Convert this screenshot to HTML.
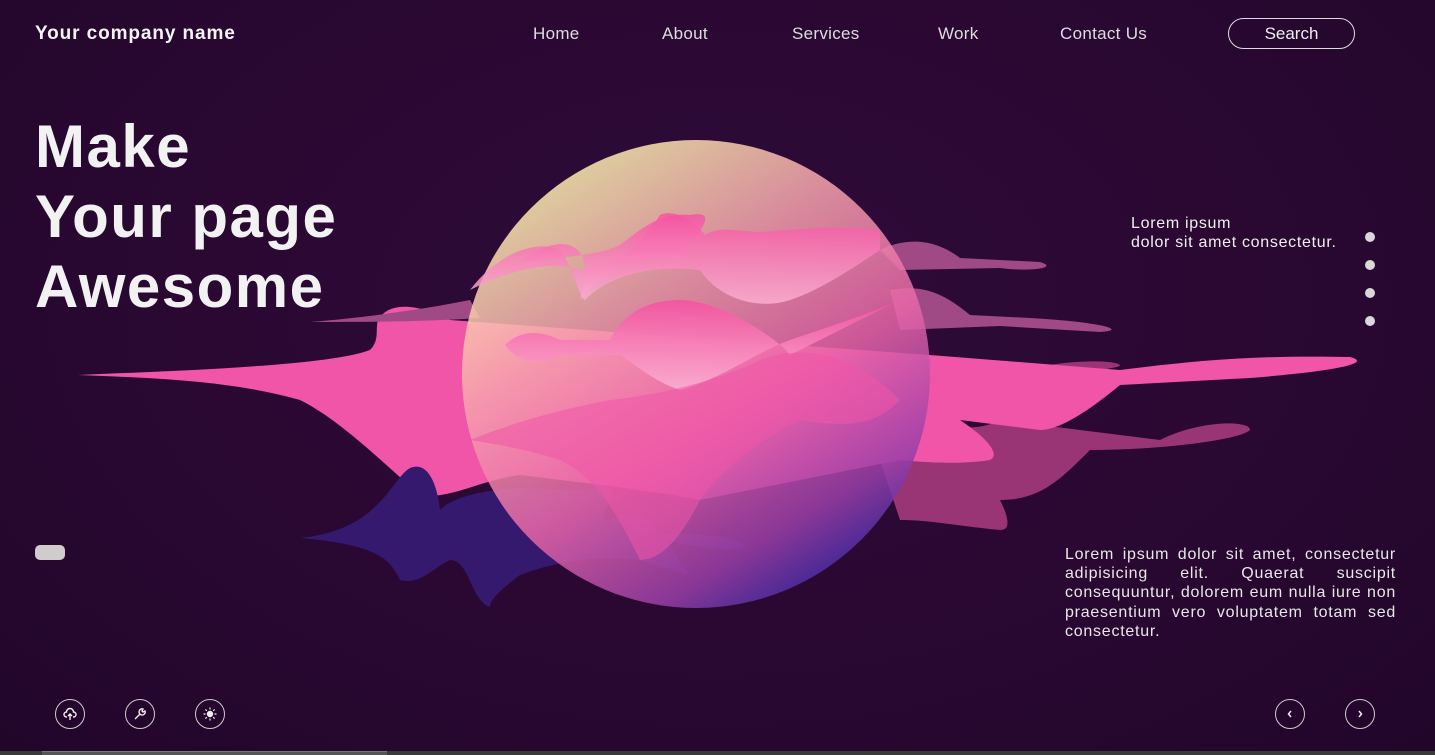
<!DOCTYPE html>
<html><head><meta charset="utf-8">
<style>
*{margin:0;padding:0;box-sizing:border-box}
html,body{width:1435px;height:755px;overflow:hidden}
body{background:radial-gradient(ellipse at 50% 40%,#2f0c3a 0%,#2a0832 50%,#22062a 100%);font-family:"Liberation Sans",sans-serif;color:#eee;position:relative}
.logo{position:absolute;left:35px;top:23px;font-size:19px;font-weight:bold;color:#f4f4f4;letter-spacing:0.9px}
.nav a{position:absolute;top:24px;font-size:17px;color:#ddd;text-decoration:none;letter-spacing:0.3px}
.search{position:absolute;left:1228px;top:18px;width:127px;height:31px;border:1px solid #ddd;border-radius:16px;text-align:center;line-height:29px;font-size:17px;color:#eee}
h1{position:absolute;left:35px;top:112px;font-size:60px;line-height:70px;font-weight:bold;color:#f2f2f2;letter-spacing:1.5px}
.tr{position:absolute;left:1131px;top:214px;font-size:16px;line-height:19px;color:#f0f0f0;letter-spacing:0.7px;white-space:nowrap}
.dots span{position:absolute;left:1365px;width:10px;height:10px;border-radius:50%;background:#d8d8d8}
.pill{position:absolute;left:35px;top:545px;width:30px;height:15px;border-radius:5px;background:#d0cccc}
.br{position:absolute;left:1065px;top:545px;width:331px;font-size:16px;line-height:19.2px;text-align:justify;color:#e8e8e8;letter-spacing:0.75px}
.ic{position:absolute;top:699px;width:30px;height:30px;border:1px solid #ccc;border-radius:50%;display:flex;align-items:center;justify-content:center}
.bar{position:absolute;left:0;top:751px;width:1435px;height:4px;background:#3a3a3a}
.bar i{position:absolute;left:42px;top:0;width:345px;height:4px;background:#555;border-top:1px solid #777}
</style></head><body>
<svg width="1435" height="755" style="position:absolute;left:0;top:0">
<defs>
<linearGradient id="cg" x1="0.25" y1="0.05" x2="0.8" y2="0.95">
<stop offset="0" stop-color="#fdf0b0"/><stop offset="0.3" stop-color="#f6a3ad"/><stop offset="0.6" stop-color="#e865a8"/><stop offset="0.85" stop-color="#9a3fa8"/><stop offset="1" stop-color="#3a2aa8"/>
</linearGradient>
<linearGradient id="pg" x1="0" y1="0" x2="0" y2="1"><stop offset="0" stop-color="#f552a0"/><stop offset="1" stop-color="#fab0d2"/></linearGradient>
</defs>
<path fill="#a04a85" d="M880,250 C900,240 930,235 960,258 L1040,262 C1060,268 1030,272 1000,268 L900,270Z"/>
<path fill="#a04a85" d="M890,290 C920,285 940,290 970,315 L1030,318 C1100,322 1130,330 1100,332 L1000,326 L900,330Z"/>
<path fill="#9a3575" d="M920,420 C960,430 980,430 1000,420 L1160,440 C1200,420 1250,420 1250,430 C1240,440 1160,450 1090,450 C1060,480 1040,500 1000,500 C1010,520 1010,530 1000,530 C950,525 930,520 900,520 L880,460Z"/>
<path fill="#9a3575" d="M1050,365 C1080,360 1120,360 1120,366 C1100,372 1070,372 1050,370Z"/>
<path fill="#f055a8" d="M78,375 C200,370 330,365 370,350 C380,340 375,330 378,320 C390,300 420,305 450,320 L930,355 L1120,370 C1200,360 1260,355 1350,357 C1370,362 1350,370 1250,378 L1120,385 C1090,410 1060,430 1040,430 L960,420 C990,440 1000,455 990,460 C960,465 920,462 900,460 L700,500 C650,490 560,480 520,475 C480,480 450,500 420,495 C380,460 340,420 300,400 C230,380 150,378 78,375Z"/>
<path fill="#a04a85" d="M310,322 C360,318 420,310 470,300 L480,318 C420,322 360,322 310,322Z"/>
<path fill="#35196e" d="M300,538 C380,530 390,480 410,468 C430,460 438,490 440,510 C460,490 520,485 560,490 L610,488 C615,500 600,510 605,520 L640,510 C660,530 680,560 690,575 L640,560 C600,555 560,560 520,575 C500,590 490,600 490,607 C470,600 470,560 450,560 C430,570 420,585 400,580 C390,560 380,545 300,538Z"/>
<path fill="#35196e" d="M640,535 C690,530 740,538 746,546 C740,552 710,548 690,545Z"/>
<circle cx="696" cy="374" r="234" fill="url(#cg)" opacity="0.85"/>
<path fill="url(#pg)" opacity="0.85" d="M520,262 C560,230 600,240 580,300 C600,270 640,255 680,260 C700,230 720,210 690,215 C660,212 640,230 620,245 C600,255 560,258 520,262Z"/>
<path fill="url(#pg)" opacity="0.85" d="M470,290 C500,250 540,240 560,250 C575,270 580,300 585,300 C610,275 650,265 700,270 C720,300 760,310 790,300 C820,290 850,270 880,250 L880,230 C830,225 790,230 760,232 C740,232 720,225 705,235 C690,215 670,210 660,215 C640,245 620,265 580,270 C550,260 510,270 470,290Z"/>
<path fill="url(#pg)" opacity="0.9" d="M505,345 C520,330 540,330 560,340 L610,340 C620,320 640,300 680,300 C720,300 780,340 790,355 C820,340 860,320 900,300 C880,310 820,330 790,340 C760,350 720,380 680,390 C650,380 630,360 620,355 L560,355 C540,365 520,365 505,345Z"/>
<path fill="#f055a8" opacity="0.55" d="M470,440 C520,420 560,410 610,400 C660,395 720,380 760,360 C800,345 850,350 900,400 C880,420 860,430 800,420 C760,440 720,470 700,500 C680,540 660,560 640,560 C620,520 600,480 560,460 C530,450 500,445 470,440Z"/>
</svg>
<div class="logo">Your company name</div>
<div class="nav"><a style="left:533px">Home</a><a style="left:662px">About</a><a style="left:792px">Services</a><a style="left:938px">Work</a><a style="left:1060px">Contact Us</a></div>
<div class="search">Search</div>
<h1>Make<br>Your page<br>Awesome</h1>
<div class="tr">Lorem ipsum<br>dolor sit amet consectetur.</div>
<div class="dots"><span style="top:232px"></span><span style="top:260px"></span><span style="top:288px"></span><span style="top:316px"></span></div>
<div class="pill"></div>
<div class="br">Lorem ipsum dolor sit amet, consectetur adipisicing elit. Quaerat suscipit consequuntur, dolorem eum nulla iure non praesentium vero voluptatem totam sed consectetur.</div>
<div class="ic" style="left:55px"><svg width="14" height="14" viewBox="0 0 14 14" fill="none" stroke="#eee" stroke-width="1.4"><path d="M4,10 H3.5 A2.5,2.5 0 0 1 3.5,5 A3.5,3.5 0 0 1 10.5,5 A2.5,2.5 0 0 1 10.5,10 H10"/><path d="M7,13 V7 M5,9 L7,7 L9,9"/></svg></div>
<div class="ic" style="left:125px"><svg width="14" height="14" viewBox="0 0 14 14" fill="none" stroke="#eee" stroke-width="1.4"><path d="M2,12 L7,7 A3,3 0 0 1 10,2 L9,4 L10,5 L12,4 A3,3 0 0 1 7.5,7.5"/></svg></div>
<div class="ic" style="left:195px"><svg width="14" height="14" viewBox="0 0 14 14" fill="#eee" stroke="#eee" stroke-width="1.2"><circle cx="7" cy="7" r="2.6"/><path d="M7,0.5V2.5M7,11.5V13.5M0.5,7H2.5M11.5,7H13.5M2.4,2.4L3.8,3.8M10.2,10.2L11.6,11.6M2.4,11.6L3.8,10.2M10.2,3.8L11.6,2.4"/></svg></div>
<div class="ic" style="left:1275px"><svg width="10" height="10" viewBox="0 0 10 10" fill="none" stroke="#eee" stroke-width="1.5"><path d="M6,2 L3.5,5 L6,8"/></svg></div>
<div class="ic" style="left:1345px"><svg width="10" height="10" viewBox="0 0 10 10" fill="none" stroke="#eee" stroke-width="1.5"><path d="M4,2 L6.5,5 L4,8"/></svg></div>
<div class="bar"><i></i></div>
</body></html>
